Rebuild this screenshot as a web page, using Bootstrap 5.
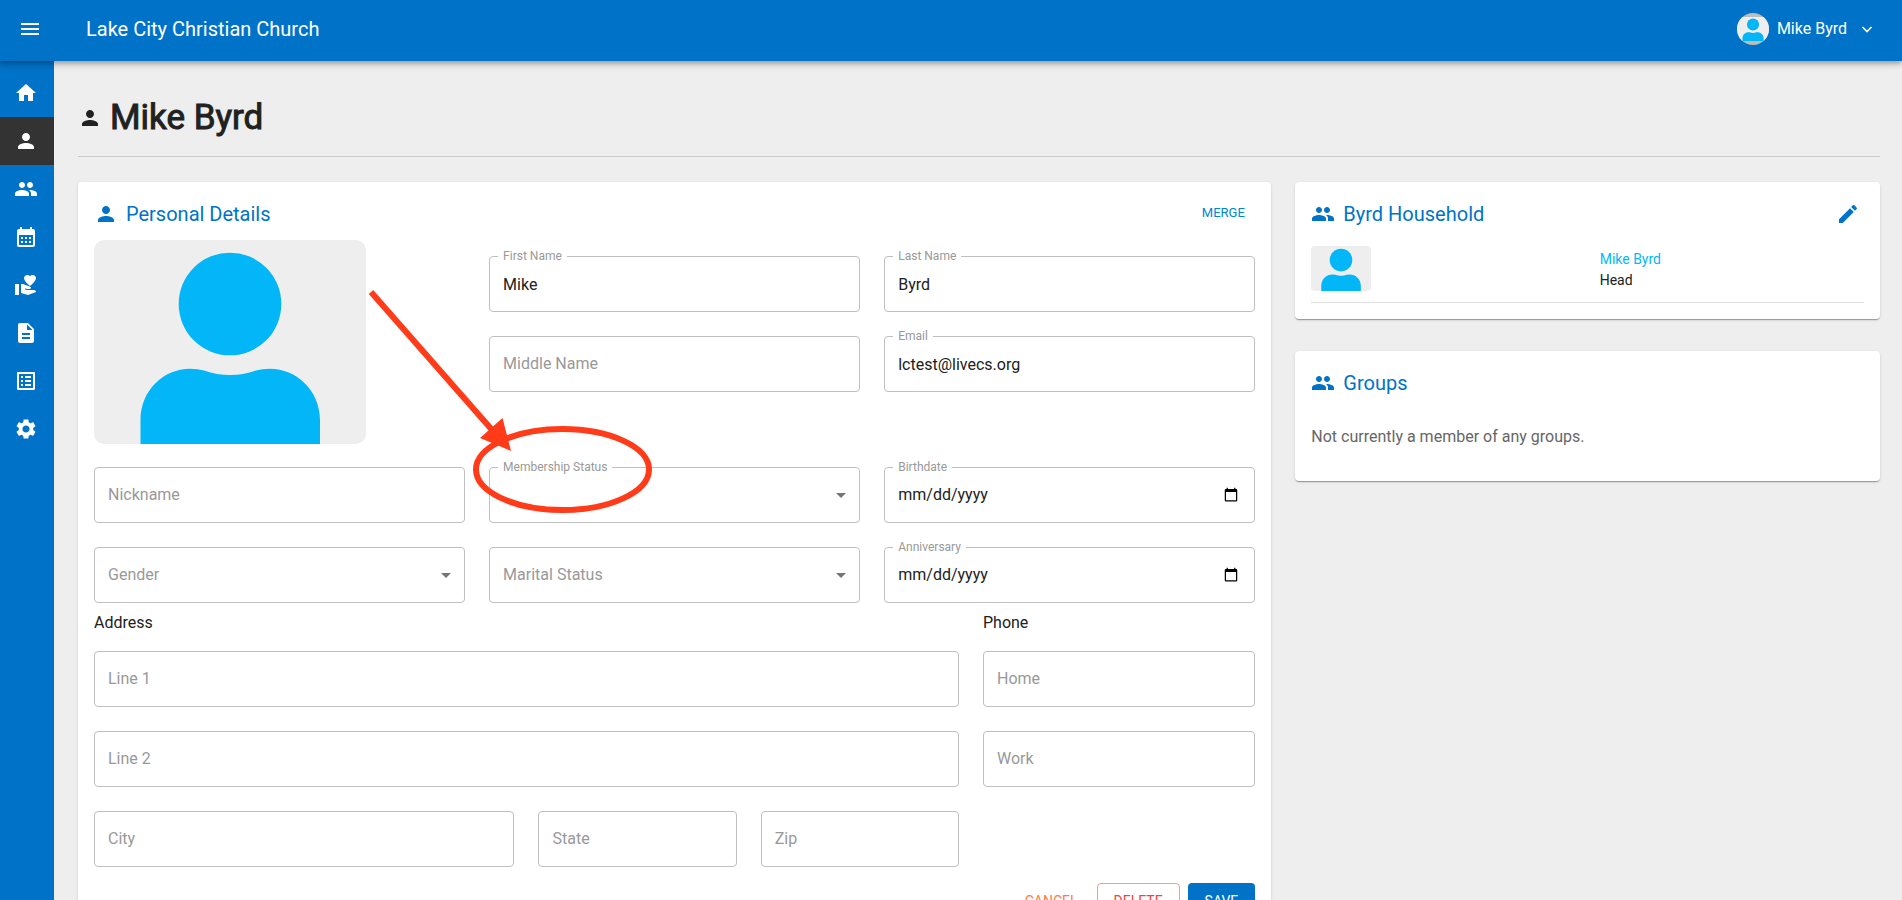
<!DOCTYPE html>
<html lang="en">
<head>
<meta charset="utf-8">
<meta name="viewport" content="width=device-width, initial-scale=1">
<title>Mike Byrd</title>
<link href="https://cdn.jsdelivr.net/npm/bootstrap@5.3.0/dist/css/bootstrap.min.css" rel="stylesheet">
<style>
  :root { --brand: #0073c8; --accent: #03b6f7; --ink: #212121; --hint: #999; }
  body { font-family: Roboto, "Liberation Sans", sans-serif; color: var(--ink); background: #eee; }
  .icon { width: 24px; height: 24px; fill: currentColor; flex: none; display: block; }

  .topbar { height: 61px; padding: 0 27px 3px 18px; background: var(--brand); color: #fff; z-index: 2;
    box-shadow: 0 2px 4px -1px rgba(0,0,0,.2), 0 4px 5px rgba(0,0,0,.14), 0 1px 10px rgba(0,0,0,.12); }
  .org-name { font-size: 20px; line-height: 32px; margin-left: 44px; }
  .user-pic { width: 32px; height: 32px; border-radius: 50%; background: #bdbdbd; display: block; }

  .rail { width: 54px; background: var(--brand); padding-top: 8px; }
  .rail a { display: flex; align-items: center; height: 48px; padding-left: 14px; color: #fff; }
  .rail a.active { background: #333; }

  .page { padding: 24px 22px 0 24px; overflow: auto; scrollbar-width: none; }
  .page::-webkit-scrollbar { display: none; }
  .page-title { font-size: 35px; line-height: 44px; font-weight: 400; -webkit-text-stroke: 1px currentColor;
    margin: 11px 0 25px; padding-bottom: 16px; border-bottom: 1px solid #ccc; }

  .panel { background: #fff; border-radius: 4px; padding: 16px;
    box-shadow: 0 2px 1px -1px rgba(0,0,0,.2), 0 1px 1px rgba(0,0,0,.14), 0 1px 3px rgba(0,0,0,.12); }
  .panel-title { font-size: 20px; line-height: 32px; font-weight: 400; color: var(--brand); margin: 0; }
  .panel-head { margin-bottom: 10px; }
  .plain-btn { border: 0; background: none; color: var(--brand); }

  .photo { width: 272px; max-width: 100%; border-radius: 10px; display: block; }
  .photo-sm { width: 60px; border-radius: 4px; display: block; }

  .field { position: relative; margin: 16px 0 8px; }
  .field .form-control, .field .form-select { height: 56px; padding: 0 13px; font-size: 16px; line-height: 24px;
    color: var(--ink); border: 1px solid #c0c0c0; border-radius: 4px; background-color: #fff; }
  .field .form-control[type=date] { padding: 16px 13px; }
  .field .form-select { background-image: url("data:image/svg+xml,%3Csvg xmlns='http://www.w3.org/2000/svg' viewBox='0 0 24 24'%3E%3Cpath fill='%23757575' d='M7 10l5 5 5-5z'/%3E%3C/svg%3E");
    background-size: 24px 24px; background-position: right 6px center; }
  .field label { position: absolute; left: 14px; top: 16px; font-size: 16px; line-height: 24px; color: var(--hint); pointer-events: none; }
  .field.raised label { left: 9px; top: -8px; padding: 0 5px; font-size: 12px; line-height: 16px; background: #fff; }
  .photo-row { min-height: 211px; }
  .section-name { font-size: 16px; line-height: 24px; font-weight: 400; margin: 0; }

  .action { height: 36px; padding: 0 16px; font-size: 14px; line-height: 24px; border-radius: 4px; border: 1px solid transparent; background: none; }
  .action-cancel { color: #ff7a45; padding: 0 10px; }
  .action-delete { color: #f44336; border-color: #f99a94; }
  .action-save { color: #fff; background: var(--brand); }
  .merge { font-size: 13px; line-height: 22px; width: 64px; padding: 0; color: #0087d1; margin-bottom: 2px; }

  .member-row { margin-top: 16px; }
  .member { font-size: 14px; line-height: 21px; padding-top: 3px; }
  .member a { color: #03b9f5; }
  .member-line { border-bottom: 1px solid #e0e0e0; margin-top: 11px; }
  .groups { margin-top: 32px; }
  .groups-note { font-size: 16px; line-height: 24px; color: #666; margin: 26px 0 16px; }

  /* arrow and ring drawn over the form */
  .callout { position: absolute; left: -124px; top: -182px; width: 292px; height: 232px; z-index: 3; pointer-events: none; }
</style>
</head>
<body>
<svg width="0" height="0" class="position-absolute" aria-hidden="true">
  <symbol id="person" viewBox="0 0 24 24"><path d="M12 12c2.21 0 4-1.79 4-4s-1.79-4-4-4-4 1.790-4 4 1.790 4 4 4zm0 2c-2.670 0-8 1.340-8 4v2h16v-2c0-2.660-5.330-4-8-4z"/></symbol>
  <symbol id="people" viewBox="0 0 24 24"><path d="M16 11c1.660 0 2.990-1.340 2.990-3S17.660 5 16 5s-3 1.340-3 3 1.340 3 3 3zm-8 0c1.660 0 2.990-1.340 2.990-3S9.660 5 8 5 5 6.340 5 8s1.340 3 3 3zm0 2c-2.330 0-7 1.170-7 3.500V19h14v-2.500c0-2.330-4.670-3.500-7-3.500zm8 0c-.290 0-.620.020-.970.050 1.160.840 1.970 1.970 1.970 3.450V19h6v-2.500c0-2.330-4.670-3.500-7-3.500z"/></symbol>
  <symbol id="portrait" viewBox="0 0 272 204"><rect width="272" height="204" fill="#eee"/><g fill="#03b6f7"><circle cx="136" cy="64" r="51.300"/><path d="M46.500 204V180C46.500 150 70 128.700 96 128.700Q104 128.700 110 130.500Q136 139.500 162 130.500Q168 128.700 176 128.700C202 128.700 226 150 226 180V204Z"/></g></symbol>
</svg>

<div class="vh-100 d-flex flex-column overflow-hidden">
  <header class="topbar d-flex align-items-center flex-shrink-0 position-relative">
    <button type="button" class="plain-btn p-0 text-white" aria-label="Menu"><svg class="icon" viewBox="0 0 24 24"><path d="M3 18h18v-2H3v2zm0-5h18v-2H3v2zm0-7v2h18V6H3z"/></svg></button>
    <div class="org-name">Lake City Christian Church</div>
    <button type="button" class="plain-btn p-0 text-white ms-auto d-flex align-items-center gap-2">
      <svg class="user-pic"><use href="#portrait"/></svg>
      <span>Mike Byrd</span>
      <svg width="16" height="16" viewBox="0 0 16 16" class="ms-1" fill="none" stroke="#fff" stroke-width="1.6"><path d="M3.500 6l4.500 4.500L12.500 6"/></svg>
    </button>
  </header>

  <div class="d-flex flex-grow-1 overflow-hidden">
    <nav class="rail flex-shrink-0" aria-label="Main">
      <a href="#" aria-label="Home"><svg class="icon" viewBox="0 0 24 24"><path d="M10 20v-6h4v6h5v-8h3L12 3 2 12h3v8z"/></svg></a>
      <a href="#" class="active" aria-label="Person"><svg class="icon"><use href="#person"/></svg></a>
      <a href="#" aria-label="People"><svg class="icon"><use href="#people"/></svg></a>
      <a href="#" aria-label="Calendar"><svg class="icon" viewBox="0 0 24 24"><path d="M19 4h-1V2h-2v2H8V2H6v2H5c-1.110 0-1.990.9-1.990 2L3 20c0 1.100.890 2 2 2h14c1.100 0 2-.9 2-2V6c0-1.100-.9-2-2-2zm0 16H5V10h14v10zM9 14H7v-2h2v2zm4 0h-2v-2h2v2zm4 0h-2v-2h2v2zm-8 4H7v-2h2v2zm4 0h-2v-2h2v2zm4 0h-2v-2h2v2z"/></svg></a>
      <a href="#" aria-label="Giving"><svg class="icon" viewBox="0 0 24 24"><path d="M1 11h4v11H1zM16 3.250C16.650 2.490 17.660 2 18.700 2 20.550 2 22 3.450 22 5.300c0 2.270-2.910 4.900-6 7.700-3.090-2.810-6-5.440-6-7.700C10 3.450 11.450 2 13.300 2c1.040 0 2.050.490 2.700 1.250zM20 17h-7l-2.090-.730.330-.940L13 16h2.820c.650 0 1.180-.530 1.180-1.180 0-.490-.310-.930-.770-1.110L8.970 11H7v9.020L14 22l8-3c-.010-1.100-.890-2-2-2z"/></svg></a>
      <a href="#" aria-label="Documents"><svg class="icon" viewBox="0 0 24 24"><path d="M14 2H6c-1.100 0-1.990.9-1.990 2L4 20c0 1.100.890 2 1.990 2H18c1.100 0 2-.9 2-2V8l-6-6zm2 16H8v-2h8v2zm0-4H8v-2h8v2zm-3-5V3.500L18.500 9H13z"/></svg></a>
      <a href="#" aria-label="Forms"><svg class="icon" viewBox="0 0 24 24"><path d="M19 5v14H5V5h14m1.100-2H3.900c-.5 0-.9.4-.9.9v16.200c0 .4.4.9.9.9h16.200c.4 0 .9-.5.9-.9V3.900c0-.5-.5-.9-.9-.9zM11 7h6v2h-6V7zm0 4h6v2h-6v-2zm0 4h6v2h-6zM7 7h2v2H7zm0 4h2v2H7zm0 4h2v2H7z"/></svg></a>
      <a href="#" aria-label="Settings"><svg class="icon" viewBox="0 0 24 24"><path d="M19.140 12.940c.040-.3.060-.610.060-.940 0-.320-.020-.640-.070-.940l2.030-1.580c.180-.140.230-.410.120-.610l-1.920-3.320c-.120-.220-.370-.290-.590-.220l-2.390.960c-.5-.380-1.030-.7-1.620-.940l-.360-2.540c-.040-.240-.240-.410-.480-.410h-3.840c-.240 0-.430.170-.470.410l-.360 2.540c-.590.240-1.130.570-1.620.940l-2.390-.960c-.220-.080-.470 0-.590.220L2.740 8.870c-.120.210-.080.470.120.610l2.030 1.580c-.050.3-.090.630-.090.940s.020.640.070.940l-2.030 1.580c-.180.140-.230.410-.120.610l1.920 3.320c.120.220.370.290.590.220l2.390-.960c.5.380 1.030.7 1.620.940l.360 2.540c.050.240.240.410.480.410h3.840c.240 0 .440-.170.470-.410l.360-2.540c.590-.240 1.130-.560 1.620-.940l2.390.960c.220.080.470 0 .590-.220l1.920-3.320c.120-.220.070-.470-.120-.610l-2.010-1.580zM12 15.600c-1.980 0-3.600-1.620-3.600-3.600s1.620-3.600 3.600-3.600 3.600 1.620 3.600 3.600-1.620 3.600-3.600 3.600z"/></svg></a>
    </nav>

    <main class="page flex-grow-1">
      <h1 class="page-title d-flex align-items-center gap-2"><svg class="icon"><use href="#person"/></svg>Mike Byrd</h1>

      <div class="row gx-4">
        <div class="col-8">
          <form class="panel">
            <div class="panel-head d-flex align-items-center justify-content-between">
              <h2 class="panel-title d-flex align-items-center gap-2"><svg class="icon"><use href="#person"/></svg>Personal Details</h2>
              <button type="button" class="plain-btn merge">MERGE</button>
            </div>

            <div class="row gx-4 photo-row">
              <div class="col-4">
                <svg class="photo" viewBox="0 0 272 204" role="img" aria-label="Profile photo"><use href="#portrait"/></svg>
              </div>
              <div class="col-4">
                <div class="field raised"><input class="form-control" id="first" value="Mike"><label for="first">First Name</label></div>
                <div class="field mt-4"><input class="form-control" id="middle"><label for="middle">Middle Name</label></div>
              </div>
              <div class="col-4">
                <div class="field raised"><input class="form-control" id="last" value="Byrd"><label for="last">Last Name</label></div>
                <div class="field raised mt-4"><input class="form-control" type="email" id="email" value="lctest@livecs.org"><label for="email">Email</label></div>
              </div>
            </div>

            <div class="row gx-4">
              <div class="col-4"><div class="field"><input class="form-control" id="nick"><label for="nick">Nickname</label></div></div>
              <div class="col-4"><div class="field raised">
                <select class="form-select" id="member"><option></option></select><label for="member">Membership Status</label>
                <svg class="callout" viewBox="0 0 292 232" aria-hidden="true">
                  <path d="M6 7L128 146" stroke="#ff3b1a" stroke-width="6"/>
                  <path d="M115 153L137.500 133L146 166Z" fill="#ff3b1a"/>
                  <ellipse cx="197.500" cy="184.500" rx="86.500" ry="40.500" fill="none" stroke="#ff3b1a" stroke-width="6"/>
                </svg>
              </div></div>
              <div class="col-4"><div class="field raised"><input class="form-control" type="date" id="birth"><label for="birth">Birthdate</label></div></div>
            </div>

            <div class="row gx-4">
              <div class="col-4"><div class="field"><select class="form-select" id="gender"><option></option></select><label for="gender">Gender</label></div></div>
              <div class="col-4"><div class="field"><select class="form-select" id="marital"><option></option></select><label for="marital">Marital Status</label></div></div>
              <div class="col-4"><div class="field raised"><input class="form-control" type="date" id="anniv"><label for="anniv">Anniversary</label></div></div>
            </div>

            <div class="row gx-4">
              <div class="col-9">
                <h3 class="section-name">Address</h3>
                <div class="field"><input class="form-control" id="line1"><label for="line1">Line 1</label></div>
                <div class="field mt-4"><input class="form-control" id="line2"><label for="line2">Line 2</label></div>
                <div class="row gx-4">
                  <div class="col-6"><div class="field"><input class="form-control" id="city"><label for="city">City</label></div></div>
                  <div class="col-3"><div class="field"><input class="form-control" id="state"><label for="state">State</label></div></div>
                  <div class="col-3"><div class="field"><input class="form-control" id="zip"><label for="zip">Zip</label></div></div>
                </div>
              </div>
              <div class="col-3">
                <h3 class="section-name">Phone</h3>
                <div class="field"><input class="form-control" id="home"><label for="home">Home</label></div>
                <div class="field mt-4"><input class="form-control" id="work"><label for="work">Work</label></div>
              </div>
            </div>

            <div class="d-flex justify-content-end gap-2 mt-2">
              <button type="button" class="action action-cancel">CANCEL</button>
              <button type="button" class="action action-delete">DELETE</button>
              <button type="submit" class="action action-save">SAVE</button>
            </div>
          </form>
        </div>

        <div class="col-4">
          <section class="panel">
            <div class="d-flex align-items-center justify-content-between">
              <h2 class="panel-title d-flex align-items-center gap-2"><svg class="icon"><use href="#people"/></svg>Byrd Household</h2>
              <button type="button" class="plain-btn p-0 me-1" aria-label="Edit household"><svg class="icon" viewBox="0 0 24 24"><path d="M3 17.250V21h3.750L17.810 9.940l-3.750-3.750L3 17.250zM20.710 7.040c.390-.390.390-1.020 0-1.410l-2.340-2.340c-.390-.390-1.020-.390-1.410 0l-1.830 1.830 3.750 3.750 1.830-1.830z"/></svg></button>
            </div>
            <div class="row gx-4 align-items-center member-row">
              <div class="col-6"><svg class="photo-sm" viewBox="0 0 272 204" role="img" aria-label="Mike Byrd"><use href="#portrait"/></svg></div>
              <div class="col-6 member"><a href="#" class="text-decoration-none">Mike Byrd</a><div>Head</div></div>
            </div>
            <div class="member-line"></div>
          </section>

          <section class="panel groups">
            <h2 class="panel-title d-flex align-items-center gap-2"><svg class="icon"><use href="#people"/></svg>Groups</h2>
            <p class="groups-note">Not currently a member of any groups.</p>
          </section>
        </div>
      </div>
    </main>
  </div>
</div>
<script src="https://cdn.jsdelivr.net/npm/bootstrap@5.3.0/dist/js/bootstrap.bundle.min.js"></script>
</body>
</html>
